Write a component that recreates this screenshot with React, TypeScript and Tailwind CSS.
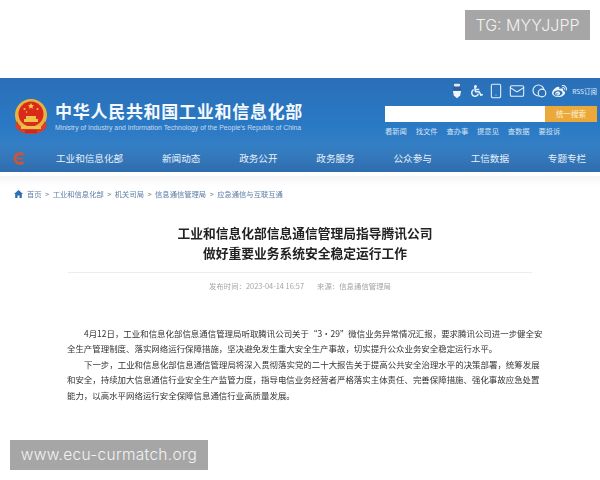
import React from 'react';
import { Mail, Smartphone } from 'lucide-react';
import { FaWeibo, FaWheelchair } from 'react-icons/fa';

const cjk = "font-['Noto_Sans_CJK_SC','Noto_Sans',sans-serif]";
const navItems = ['工业和信息化部', '新闻动态', '政务公开', '政务服务', '公众参与', '工信数据', '专题专栏'];
const quickLinks = ['看新闻', '找文件', '查办事', '提意见', '查数据', '要投诉'];
const crumbs = ['工业和信息化部', '机关司局', '信息通信管理局', '应急通信与互联互通'];

function Emblem() {
  return (
    <svg width="34" height="36" viewBox="0 0 34 36" className="shrink-0">
      <circle cx="17" cy="16" r="16" fill="#e8b33f" />
      <circle cx="17" cy="15" r="12.500" fill="#d92a1c" />
      <path d="M16 6l1-2 1 2 2 .3-1.500 1.400.4 2-1.900-1-1.900 1 .4-2L14 6.300z" fill="#f3c93f" />
      <circle cx="10.500" cy="10" r="1" fill="#f3c93f" />
      <circle cx="23.500" cy="10" r="1" fill="#f3c93f" />
      <circle cx="12.500" cy="13" r="0.800" fill="#f3c93f" />
      <path d="M10 20h14v3H10zM12 17h10v3H12z" fill="#f0c24a" />
      <path d="M3 22c3 7 8 8 14 8s11-1 14-8l2 5c-3 6-9 8-16 8S4 33 1 27z" fill="#d6402a" />
      <path d="M7 27h20v3H7z" fill="#efc04a" />
      <path d="M11 31h12v3H11z" fill="#c92a1e" />
    </svg>
  );
}

function TopIcons() {
  return (
    <div className="flex items-center justify-end pr-[3px] h-[26px] text-[#e6f0fa]">
      <svg width="10" height="16" viewBox="0 0 11 16">
        <rect x="2" y="0" width="7" height="3" rx="1.500" fill="#dfe8f2" />
        <rect x="1" y="3.500" width="9" height="4" rx="1" fill="#2f5f9e" />
        <path d="M1 8h9l-1 5-3.500 3L2 13z" fill="#f2f5f8" />
      </svg>
      <FaWheelchair size={12} className="ml-[9px]" />
      <Smartphone size={16} strokeWidth={1.600} className="ml-[5px]" />
      <Mail size={16} strokeWidth={1.600} className="ml-[5px]" />
      <svg width="15" height="14" viewBox="0 0 15 14" fill="none" stroke="#e6f0fa" strokeWidth="1.200" className="ml-[7px]">
        <circle cx="6.500" cy="6.500" r="5.500" />
        <circle cx="10" cy="9" r="3.800" fill="#2a6fb5" />
      </svg>
      <FaWeibo size={15} className="ml-[5px] text-[#f2f5f8]" />
      <span className={`${cjk} ml-[5px] text-[6.500px] leading-none whitespace-nowrap`}>RSS订阅</span>
    </div>
  );
}

function Header() {
  return (
    <header className="h-[94px] bg-gradient-to-b from-[#2a6fb8] via-[#2a79c4] to-[#3f86c6] text-white flex flex-col">
      <div className="h-[66px] flex justify-between">
        <div className="flex items-center gap-[7px] pl-[14px] pt-[11px]">
          <Emblem />
          <div className="flex flex-col">
            <span className={`${cjk} font-bold text-[17px] leading-[22px] tracking-[0.720px] whitespace-nowrap text-[#f6f9fc]`}>中华人民共和国工业和信息化部</span>
            <span className="mt-[1px] font-['Liberation_Sans',sans-serif] text-[6.850px] leading-[10px] whitespace-nowrap text-[#c8dcef]">Ministry of Industry and Information Technology of the People's Republic of China</span>
          </div>
        </div>
        <div className="w-[215px]">
          <TopIcons />
          <div className="flex h-[16px] mt-[2px] mr-[3px]">
            <div className="flex-1 bg-white" />
            <div className={`${cjk} w-[52px] bg-[#eba93a] text-[7.500px] flex items-center justify-center text-[#fdf3df]`}>统一搜索</div>
          </div>
          <div className={`${cjk} flex gap-[8.800px] text-[7.300px] leading-[10px] mt-[4px] text-[#d5e4f3]`}>
            {quickLinks.map((l) => <span key={l}>{l}</span>)}
          </div>
        </div>
      </div>
      <nav className="flex-1 flex items-center relative pl-[13px] bg-gradient-to-b from-[#3a82c6]/0 to-[#2e6cae]">
        <svg width="12" height="13" viewBox="0 0 12 13" fill="none" className="shrink-0 mr-[31px]">
          <path d="M10.500 3A5 5 0 1 0 10.500 10" stroke="#c9553a" strokeWidth="3" />
          <path d="M4 6.500h6" stroke="#c9553a" strokeWidth="1.500" />
        </svg>
        <div className={`${cjk} flex gap-[38.800px] text-[9.600px] text-[#e9f1f9]`}>
          {navItems.map((n) => <span key={n} className="whitespace-nowrap">{n}</span>)}
        </div>
      </nav>
    </header>
  );
}

export default function App() {
  return (
    <div className={`${cjk} relative w-[600px] h-[480px] bg-white overflow-hidden`}>
      <div className="h-[78px]" />
      <div className="blur-[0.4px]">
        <Header />
        <div className="h-[4px]" />
        <div className="h-[10px] bg-gradient-to-b from-[#f5f5f5] to-white" />

        <div className="flex items-center h-[16px] pl-[14px] text-[7.300px] text-[#5d7fa6]">
          <svg width="9" height="8" viewBox="0 0 9 8" className="mr-[4px]">
            <path d="M4.500 0L9 4H7.800V8H5.500V5.500h-2V8H1.200V4H0z" fill="#2f6fb3" />
          </svg>
          <span>首页</span>
          {crumbs.map((c) => (
            <span key={c} className="flex items-center">
              <span className="mx-[3.500px] text-[#777]">&gt;</span>
              <span>{c}</span>
            </span>
          ))}
        </div>

        <div className="mt-[21px] pl-[10px] flex flex-col items-center text-[12.750px] leading-[20px] font-bold text-[#222]">
          <span>工业和信息化部信息通信管理局指导腾讯公司</span>
          <span>做好重要业务系统安全稳定运行工作</span>
        </div>

        <div className="mt-[9px] mx-[68px] border-t border-[#ececec]" />

        <div className="mt-[8px] flex justify-center gap-[13px] text-[7.400px] leading-[10px] text-[#a5a5a5]">
          <span>发布时间：2023-04-14 16:57</span>
          <span>来源：信息通信管理局</span>
        </div>

        <div className="mt-[35px] ml-[67px] w-[477px] text-[8.450px] leading-[15.400px] text-[#333]">
          <p className="indent-[17px]">4月12日，工业和信息化部信息通信管理局听取腾讯公司关于“3·29”微信业务异常情况汇报，要求腾讯公司进一步健全安全生产管理制度、落实网络运行保障措施，坚决避免发生重大安全生产事故，切实提升公众业务安全稳定运行水平。</p>
          <p className="indent-[17px]">下一步，工业和信息化部信息通信管理局将深入贯彻落实党的二十大报告关于提高公共安全治理水平的决策部署，统筹发展和安全，持续加大信息通信行业安全生产监管力度，指导电信业务经营者严格落实主体责任、完善保障措施、强化事故应急处置能力，以高水平网络运行安全保障信息通信行业高质量发展。</p>
        </div>
      </div>

      {/* watermarks */}
      <div className="absolute top-[10px] left-[465px] w-[125px] h-[30px] bg-[#a6a6a6] text-[#f2f2f2] flex items-center justify-center font-['Inter',sans-serif] font-light text-[16px] whitespace-nowrap">TG: MYYJJPP</div>
      <div className="absolute top-[440px] left-[10px] w-[198px] h-[30px] bg-[#a6a6a6] text-[#f2f2f2] flex items-center justify-center font-['Inter',sans-serif] font-light text-[15.500px] tracking-[0.300px] whitespace-nowrap">www.ecu-curmatch.org</div>
    </div>
  );
}
